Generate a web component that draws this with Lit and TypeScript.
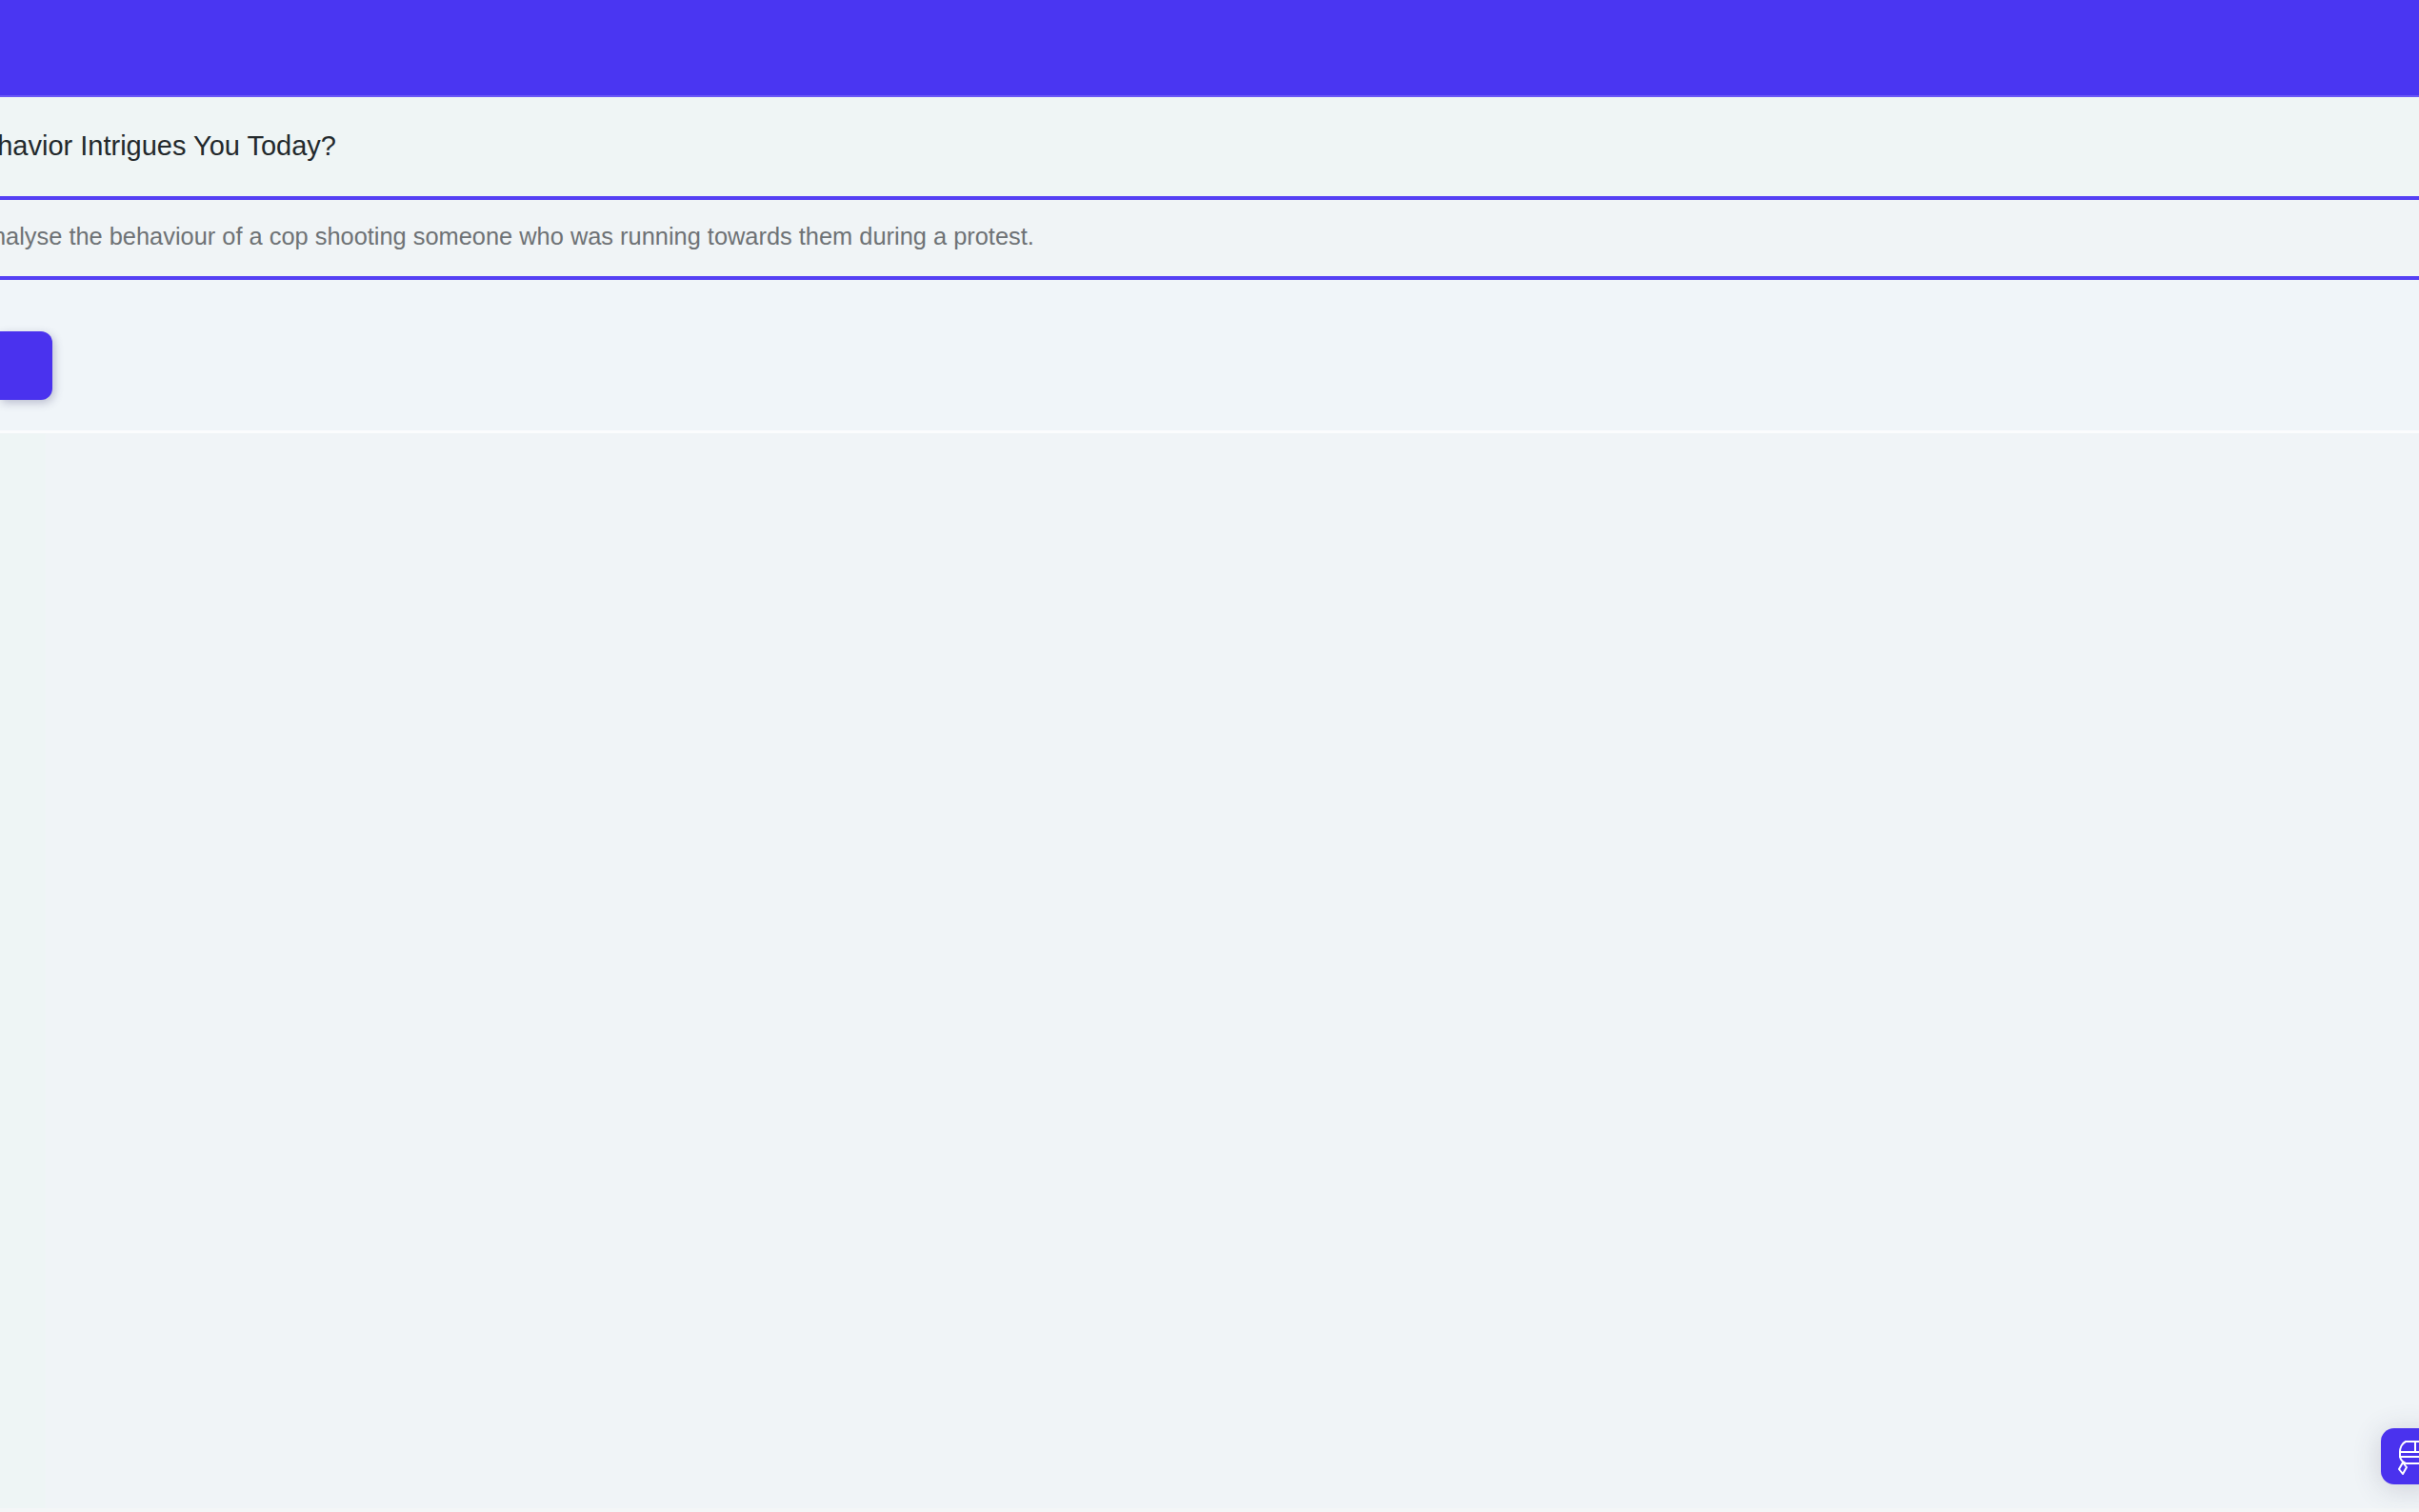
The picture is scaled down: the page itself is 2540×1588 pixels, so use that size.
import { LitElement, html, css } from "lit";
import { customElement } from "lit/decorators.js";

@customElement("app-root")
export class AppRoot extends LitElement {
  static styles = css`
    :host {
      display: block;
      width: 2540px;
      height: 1588px;
      overflow: hidden;
      position: relative;
      background:
        linear-gradient(to bottom, transparent 1584px, #f4f6f7 1584px),
        linear-gradient(to right, #eef5f5 48px, #f0f4f7 48px);
      font-family: "Liberation Sans", Arial, sans-serif;
    }
    .header {
      height: 100px;
      background: #4a36f2;
      border-bottom: 2px solid #6a58f6;
    }
    .question {
      height: 104px;
      display: flex;
      align-items: center;
      background: #eff5f5;
      font-size: 29px;
      color: #23292c;
      white-space: nowrap;
    }
    .question span { margin-left: -114px; position: relative; top: -1px; }
    .answer {
      height: 80px;
      display: flex;
      align-items: center;
      border-top: 4px solid #5540f4;
      border-bottom: 4px solid #5540f4;
      background: #f0f4f6;
      font-size: 25.4px;
      color: #6e7275;
      white-space: nowrap;
    }
    .answer span { margin-left: -25px; position: relative; top: -2px; }
    .actions {
      height: 161px;
      box-sizing: border-box;
      padding-top: 54px;
      border-bottom: 3px solid #fbfcfd;
      background: #f0f5f9;
    }
    .button {
      width: 55px;
      height: 72px;
      background: #4a32ee;
      border-radius: 0 12px 12px 0;
      box-shadow: 2px 3px 10px rgba(60, 60, 110, 0.3);
    }
    .fab {
      position: absolute;
      left: 2500px;
      top: 1500px;
      width: 60px;
      height: 59px;
      border-radius: 14px;
      background: #4a32ee;
      box-shadow: 0 4px 30px rgba(60, 60, 90, 0.2);
    }
    .fab svg { position: absolute; left: 16px; top: 10px; }
  `;

  render() {
    return html`
      <div class="header"></div>
      <div class="question"><span>What Behavior Intrigues You Today?</span></div>
      <div class="answer"><span>Analyse the behaviour of a cop shooting someone who was running towards them during a protest.</span></div>
      <div class="actions"><div class="button"></div></div>
      <div class="fab">
        <svg width="40" height="40" viewBox="0 0 40 40" fill="none" stroke="#fff" stroke-width="2" stroke-linejoin="round" stroke-linecap="round">
          <path d="M30 4 H10 C6 6 4 11 4 15 V20 C5 24 8 26 10 27 H30" />
          <path d="M4 15 H30 M4 20 H30 M20 4 V15" />
          <path d="M7 26 L11 31 L7 38 L3 33 Z" />
        </svg>
      </div>
    `;
  }
}
